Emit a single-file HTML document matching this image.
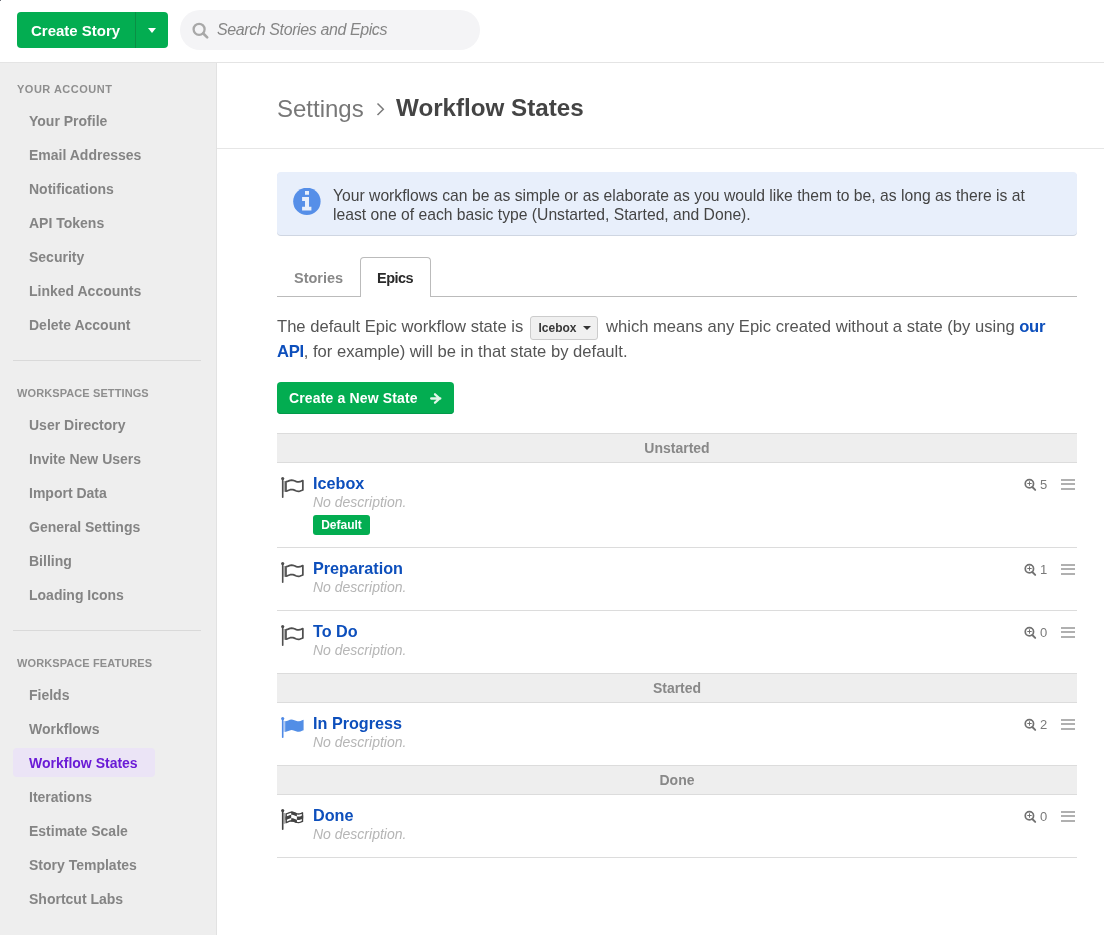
<!DOCTYPE html>
<html><head><meta charset="utf-8">
<style>
*{box-sizing:border-box;margin:0;padding:0}
html,body{width:1104px;height:935px;overflow:hidden;background:#fff;-webkit-font-smoothing:antialiased;font-family:"Liberation Sans",sans-serif;}
.abs{position:absolute;white-space:nowrap}
#header{position:absolute;left:0;top:0;width:1104px;height:63px;background:#fff;border-bottom:1px solid #e4e4e4}
#cs{position:absolute;left:17px;top:12px;width:151px;height:36px;background:#03ad51;border-radius:4px}
#cs .t{position:absolute;left:14px;top:1px;line-height:36px;color:#fff;font-weight:700;font-size:15px}
#cs .div{position:absolute;left:118px;top:0;width:1px;height:36px;background:#0a8f45}
#cs .caret{position:absolute;left:130.5px;top:15.5px;width:0;height:0;border-left:4px solid transparent;border-right:4px solid transparent;border-top:5px solid #fff}
#search{position:absolute;left:180px;top:10px;width:300px;height:40px;border-radius:20px;background:#f4f4f6}
#search .t{position:absolute;left:37px;top:0;line-height:40px;color:#858585;font-style:italic;font-size:16px;letter-spacing:-0.4px}
#sidebar{position:absolute;left:0;top:63px;width:217px;height:872px;background:#eeeeee;border-right:1px solid #e2e2e2}
.sh{position:absolute;left:17px;font-size:11px;font-weight:700;color:#8e8e8e;letter-spacing:0.5px;white-space:nowrap}
.si{position:absolute;left:29px;font-size:14px;font-weight:700;color:#848484;letter-spacing:0px;white-space:nowrap}
.sdiv{position:absolute;left:13px;width:188px;height:1px;background:#d9d9d9}
#active{position:absolute;left:13px;top:748px;width:142px;height:29px;background:#ebe4f6;border-radius:4px}
#main{position:absolute;left:217px;top:63px;width:887px;height:872px}
.title{position:absolute;left:277px;top:95px;font-size:24px;white-space:nowrap}
.hline{position:absolute;left:217px;top:148px;width:887px;height:1px;background:#e6e6e6}
#info{position:absolute;left:277px;top:172px;width:800px;height:63px;background:#e8effb;border-radius:4px;box-shadow:0 1px 0 #cfd6e2}
#info .ic{position:absolute;left:16px;top:16px;width:28px;height:28px}
#info .t{position:absolute;left:56px;top:14px;font-size:15.7px;line-height:19px;color:#444;white-space:nowrap}
#tabs{position:absolute;left:277px;top:296px;width:800px;height:1px;background:#bbb}
.tab{position:absolute;font-size:14.5px;font-weight:700;margin-top:1px;white-space:nowrap}
#epictab{position:absolute;left:360px;top:257px;width:71px;height:40px;background:#fff;border:1px solid #bbb;border-bottom:none;border-radius:4px 4px 0 0}
.para{position:absolute;left:277px;font-size:16.6px;color:#555;white-space:nowrap}
.link{color:#0d4fbc;font-weight:700;letter-spacing:-0.3px}
#dd{position:absolute;left:530px;top:316px;width:68px;height:24px;background:#f0f0f0;border:1px solid #ccc;border-radius:3px}
#dd .t{position:absolute;left:7.5px;top:0;line-height:22px;font-size:12px;font-weight:700;color:#383838}
#dd .caret{position:absolute;left:52px;top:9px;border-left:4px solid transparent;border-right:4px solid transparent;border-top:4px solid #333}
#newbtn{position:absolute;left:277px;top:382px;width:177px;height:32px;background:#03ad51;border-radius:4px;box-shadow:inset 0 -1px 0 #02994a}
#newbtn .t{position:absolute;left:12px;top:0;line-height:32px;color:#fff;font-size:14px;font-weight:700;letter-spacing:0.15px}
.gh{position:absolute;left:277px;width:800px;height:30px;background:#eeeeee;border-top:1px solid #dcdcdc;border-bottom:1px solid #dcdcdc;text-align:center;font-size:14px;font-weight:700;color:#888;line-height:28px}
.rb{position:absolute;left:277px;width:800px;height:1px;background:#dcdcdc}
.name{position:absolute;left:313px;font-size:16.2px;font-weight:700;color:#0d4fbc;white-space:nowrap}
.desc{position:absolute;left:313px;font-size:14px;font-style:italic;color:#b5b5b5;white-space:nowrap}
.badge{position:absolute;left:313px;top:515px;width:57px;height:20px;background:#03ad51;border-radius:3px;color:#fff;font-size:12px;font-weight:700;line-height:20px;text-align:center}
.flag{position:absolute;left:280px;width:26px;height:22px}
.cntn{position:absolute;left:1040px;font-size:13px;line-height:15px;color:#7a7a7a}
.ham{position:absolute;left:1061px;width:14px;height:12px}
.ham i{position:absolute;left:0;width:14px;height:2px;background:#b0b0b0}
</style></head>
<body><div style="position:absolute;left:0;top:0;width:1104px;height:935px;will-change:transform">
<div style="position:absolute;left:0;top:0;width:1px;height:1px;background:#6e717a;z-index:5"></div><div id="header">
  <div id="cs"><span class="t">Create Story</span><span class="div"></span><span class="caret"></span></div>
  <div id="search">
    <svg style="position:absolute;left:12px;top:12px" width="18" height="18" viewBox="0 0 18 18"><circle cx="7.1" cy="7.3" r="5.5" fill="none" stroke="#a8a8a8" stroke-width="2.3"/><line x1="11.3" y1="11.5" x2="15.2" y2="15.4" stroke="#a8a8a8" stroke-width="2.6" stroke-linecap="round"/></svg>
    <span class="t">Search Stories and Epics</span>
  </div>
</div>

<div id="sidebar"></div>
<div class="sh" style="top:83px">YOUR ACCOUNT</div>
<div class="si" style="top:113px">Your Profile</div>
<div class="si" style="top:147px">Email Addresses</div>
<div class="si" style="top:181px">Notifications</div>
<div class="si" style="top:215px">API Tokens</div>
<div class="si" style="top:249px">Security</div>
<div class="si" style="top:283px">Linked Accounts</div>
<div class="si" style="top:317px">Delete Account</div>
<div class="sdiv" style="top:360px"></div>
<div class="sh" style="top:387px;letter-spacing:0.1px">WORKSPACE SETTINGS</div>
<div class="si" style="top:417px">User Directory</div>
<div class="si" style="top:451px">Invite New Users</div>
<div class="si" style="top:485px">Import Data</div>
<div class="si" style="top:519px">General Settings</div>
<div class="si" style="top:553px">Billing</div>
<div class="si" style="top:587px">Loading Icons</div>
<div class="sdiv" style="top:630px"></div>
<div class="sh" style="top:657px;letter-spacing:0.1px">WORKSPACE FEATURES</div>
<div class="si" style="top:687px">Fields</div>
<div class="si" style="top:721px">Workflows</div>
<div id="active"></div>
<div class="si" style="top:755px;color:#6a1bd6">Workflow States</div>
<div class="si" style="top:789px">Iterations</div>
<div class="si" style="top:823px">Estimate Scale</div>
<div class="si" style="top:857px">Story Templates</div>
<div class="si" style="top:891px">Shortcut Labs</div>

<div class="title" style="color:#777">Settings</div><svg style="position:absolute;left:370px;top:98px" width="20" height="22"><polyline points="7.5,5.5 13.3,11.3 7.5,17" fill="none" stroke="#7a7a7a" stroke-width="1.5"/></svg><div class="title" style="left:396px;color:#444;font-weight:700;font-size:24.2px;top:94px">Workflow States</div>
<div class="hline"></div>

<div id="info">
  <svg class="ic" viewBox="0 0 28 28"><circle cx="13.9" cy="13.4" r="13.7" fill="#568fe8"/><path d="M12 3h4v3.7h-4z M9.1 9.1H16V18.7H18.4V22.5H9.1V18.7H12V12.9H9.1z" fill="#e8effb"/></svg>
  <div class="t">Your workflows can be as simple or as elaborate as you would like them to be, as long as there is at<br>least one of each basic type (Unstarted, Started, and Done).</div>
</div>

<div id="tabs"></div>
<div id="epictab"></div>
<div class="tab" style="left:294px;top:269px;color:#888">Stories</div>
<div class="tab" style="left:377px;top:269px;color:#2a2a2a;letter-spacing:-0.5px">Epics</div>

<div class="para" style="top:317px">The default Epic workflow state is</div>
<div id="dd"><span class="t">Icebox</span><span class="caret"></span></div>
<div class="para" style="left:606px;top:317px">which means any Epic created without a state (by using <span class="link">our</span></div>
<div class="para" style="top:342px"><span class="link">API</span>, for example) will be in that state by default.</div>

<div id="newbtn"><span class="t">Create a New State</span>
  <svg style="position:absolute;left:152px;top:10px" width="14" height="14" viewBox="0 0 14 14"><path d="M2.2 6.5H11.3M6 2.3L10.7 6.5L6 10.7" fill="none" stroke="#e2f6ea" stroke-width="2.3" stroke-linecap="round" stroke-linejoin="round"/></svg>
</div>

<!-- table -->
<div class="gh" style="top:433px">Unstarted</div>
<div class="rb" style="top:547px"></div>
<div class="rb" style="top:610px"></div>
<div class="gh" style="top:673px">Started</div>
<div class="rb" style="top:765px"></div>
<div class="gh" style="top:765px">Done</div>
<div class="rb" style="top:857px"></div>

<div class="name" style="top:474px">Icebox</div>
<div class="desc" style="top:494px">No description.</div>
<div class="badge">Default</div>

<div class="name" style="top:559px">Preparation</div>
<div class="desc" style="top:579px">No description.</div>

<div class="name" style="top:622px">To Do</div>
<div class="desc" style="top:642px">No description.</div>

<div class="name" style="top:714px">In Progress</div>
<div class="desc" style="top:734px">No description.</div>

<div class="name" style="top:806px">Done</div>
<div class="desc" style="top:826px">No description.</div>

<svg style="position:absolute;left:276px;top:472px" width="34" height="30" viewBox="0 0 34 30"><rect x="7.5" y="9" width="1.9" height="10.8" fill="#4f4f4f" opacity="0.45"/><line x1="6.7" y1="6.8" x2="6.7" y2="25.2" stroke="#4f4f4f" stroke-width="1.6" stroke-linecap="round"/><circle cx="6.7" cy="6.6" r="1.6" fill="#4f4f4f"/><path d="M9.95 9.86 L11.36 9.45 12.77 8.88 14.18 8.37 15.58 8.15 16.99 8.31 18.40 8.78 19.81 9.36 21.22 9.81 22.62 9.94 24.03 9.70 25.44 9.18 26.85 8.61 L26.85 17.96 25.44 18.53 24.03 19.05 22.62 19.29 21.22 19.16 19.81 18.71 18.40 18.13 16.99 17.66 15.58 17.50 14.17 17.72 12.77 18.23 11.36 18.80 9.95 19.21 Z" fill="none" stroke="#4f4f4f" stroke-width="1.75" stroke-linejoin="round"/></svg>
<svg style="position:absolute;left:1018px;top:474px" width="20" height="20" viewBox="0 0 20 20"><circle cx="11.4" cy="9.7" r="4.15" fill="none" stroke="#717171" stroke-width="1.7"/><line x1="14.3" y1="13" x2="17.2" y2="15.9" stroke="#717171" stroke-width="1.9" stroke-linecap="round"/><path d="M11.5 7.3v4.4M9.3 9.5h4.4" stroke="#717171" stroke-width="1"/></svg>
<div class="cntn" style="top:477px">5</div>
<div class="ham" style="top:479px"><i style="top:0"></i><i style="top:4px"></i><i style="top:9px"></i></div>
<svg style="position:absolute;left:276px;top:557px" width="34" height="30" viewBox="0 0 34 30"><rect x="7.5" y="9" width="1.9" height="10.8" fill="#4f4f4f" opacity="0.45"/><line x1="6.7" y1="6.8" x2="6.7" y2="25.2" stroke="#4f4f4f" stroke-width="1.6" stroke-linecap="round"/><circle cx="6.7" cy="6.6" r="1.6" fill="#4f4f4f"/><path d="M9.95 9.86 L11.36 9.45 12.77 8.88 14.18 8.37 15.58 8.15 16.99 8.31 18.40 8.78 19.81 9.36 21.22 9.81 22.62 9.94 24.03 9.70 25.44 9.18 26.85 8.61 L26.85 17.96 25.44 18.53 24.03 19.05 22.62 19.29 21.22 19.16 19.81 18.71 18.40 18.13 16.99 17.66 15.58 17.50 14.17 17.72 12.77 18.23 11.36 18.80 9.95 19.21 Z" fill="none" stroke="#4f4f4f" stroke-width="1.75" stroke-linejoin="round"/></svg>
<svg style="position:absolute;left:1018px;top:559px" width="20" height="20" viewBox="0 0 20 20"><circle cx="11.4" cy="9.7" r="4.15" fill="none" stroke="#717171" stroke-width="1.7"/><line x1="14.3" y1="13" x2="17.2" y2="15.9" stroke="#717171" stroke-width="1.9" stroke-linecap="round"/><path d="M11.5 7.3v4.4M9.3 9.5h4.4" stroke="#717171" stroke-width="1"/></svg>
<div class="cntn" style="top:562px">1</div>
<div class="ham" style="top:564px"><i style="top:0"></i><i style="top:4px"></i><i style="top:9px"></i></div>
<svg style="position:absolute;left:276px;top:620px" width="34" height="30" viewBox="0 0 34 30"><rect x="7.5" y="9" width="1.9" height="10.8" fill="#4f4f4f" opacity="0.45"/><line x1="6.7" y1="6.8" x2="6.7" y2="25.2" stroke="#4f4f4f" stroke-width="1.6" stroke-linecap="round"/><circle cx="6.7" cy="6.6" r="1.6" fill="#4f4f4f"/><path d="M9.95 9.86 L11.36 9.45 12.77 8.88 14.18 8.37 15.58 8.15 16.99 8.31 18.40 8.78 19.81 9.36 21.22 9.81 22.62 9.94 24.03 9.70 25.44 9.18 26.85 8.61 L26.85 17.96 25.44 18.53 24.03 19.05 22.62 19.29 21.22 19.16 19.81 18.71 18.40 18.13 16.99 17.66 15.58 17.50 14.17 17.72 12.77 18.23 11.36 18.80 9.95 19.21 Z" fill="none" stroke="#4f4f4f" stroke-width="1.75" stroke-linejoin="round"/></svg>
<svg style="position:absolute;left:1018px;top:622px" width="20" height="20" viewBox="0 0 20 20"><circle cx="11.4" cy="9.7" r="4.15" fill="none" stroke="#717171" stroke-width="1.7"/><line x1="14.3" y1="13" x2="17.2" y2="15.9" stroke="#717171" stroke-width="1.9" stroke-linecap="round"/><path d="M11.5 7.3v4.4M9.3 9.5h4.4" stroke="#717171" stroke-width="1"/></svg>
<div class="cntn" style="top:625px">0</div>
<div class="ham" style="top:627px"><i style="top:0"></i><i style="top:4px"></i><i style="top:9px"></i></div>
<svg style="position:absolute;left:276px;top:712px" width="34" height="30" viewBox="0 0 34 30"><rect x="7.5" y="9" width="1.9" height="10.8" fill="#4f8ae6" opacity="0.45"/><line x1="6.7" y1="6.8" x2="6.7" y2="25.2" stroke="#4f8ae6" stroke-width="1.6" stroke-linecap="round"/><circle cx="6.7" cy="6.6" r="1.6" fill="#4f8ae6"/><path d="M9.20 9.30 L10.73 9.02 12.27 8.44 13.80 7.83 15.33 7.51 16.87 7.63 18.40 8.13 19.93 8.76 21.47 9.22 23.00 9.26 24.53 8.89 26.07 8.27 27.60 7.71 L27.60 18.31 26.07 18.87 24.53 19.49 23.00 19.86 21.47 19.82 19.93 19.36 18.40 18.73 16.87 18.23 15.33 18.11 13.80 18.43 12.27 19.04 10.73 19.62 9.20 19.90 Z" fill="#528ee6"/></svg>
<svg style="position:absolute;left:1018px;top:714px" width="20" height="20" viewBox="0 0 20 20"><circle cx="11.4" cy="9.7" r="4.15" fill="none" stroke="#717171" stroke-width="1.7"/><line x1="14.3" y1="13" x2="17.2" y2="15.9" stroke="#717171" stroke-width="1.9" stroke-linecap="round"/><path d="M11.5 7.3v4.4M9.3 9.5h4.4" stroke="#717171" stroke-width="1"/></svg>
<div class="cntn" style="top:717px">2</div>
<div class="ham" style="top:719px"><i style="top:0"></i><i style="top:4px"></i><i style="top:9px"></i></div>
<svg style="position:absolute;left:276px;top:804px" width="34" height="30" viewBox="0 0 34 30"><rect x="7.5" y="9" width="1.9" height="10.8" fill="#444" opacity="0.45"/><line x1="6.7" y1="6.8" x2="6.7" y2="25.2" stroke="#444" stroke-width="1.6" stroke-linecap="round"/><circle cx="6.7" cy="6.6" r="1.6" fill="#444"/><path d="M15.20 7.52 L16.15 7.52 17.10 7.69 18.05 7.99 19.00 8.38 19.95 8.77 20.90 9.09 L20.90 12.42 19.95 12.10 19.00 11.71 18.05 11.33 17.10 11.02 16.15 10.85 15.20 10.86 Z M9.50 12.61 L10.45 12.43 11.40 12.12 12.35 11.73 13.30 11.35 14.25 11.03 15.20 10.86 L15.20 14.19 14.25 14.37 13.30 14.68 12.35 15.07 11.40 15.45 10.45 15.77 9.50 15.94 Z M20.90 12.42 L21.95 12.61 23.00 12.60 24.05 12.38 25.10 12.00 26.15 11.57 27.20 11.17 L27.20 14.50 26.15 14.90 25.10 15.34 24.05 15.71 23.00 15.93 21.95 15.95 20.90 15.75 Z M15.20 14.19 L16.15 14.19 17.10 14.35 18.05 14.66 19.00 15.05 19.95 15.44 20.90 15.75 L20.90 19.09 19.95 18.77 19.00 18.38 18.05 17.99 17.10 17.69 16.15 17.52 15.20 17.52 Z" fill="#444"/><path d="M10.20 9.86 L11.56 9.43 12.92 8.86 14.27 8.39 15.63 8.20 16.99 8.36 18.35 8.81 19.71 9.37 21.07 9.83 22.43 10.00 23.78 9.82 25.14 9.35 26.50 8.79 L26.50 17.39 25.14 17.95 23.78 18.42 22.43 18.60 21.07 18.43 19.71 17.97 18.35 17.41 16.99 16.96 15.63 16.80 14.27 16.99 12.92 17.46 11.56 18.03 10.20 18.46 Z" fill="none" stroke="#444" stroke-width="1.4" stroke-linejoin="round"/></svg>
<svg style="position:absolute;left:1018px;top:806px" width="20" height="20" viewBox="0 0 20 20"><circle cx="11.4" cy="9.7" r="4.15" fill="none" stroke="#717171" stroke-width="1.7"/><line x1="14.3" y1="13" x2="17.2" y2="15.9" stroke="#717171" stroke-width="1.9" stroke-linecap="round"/><path d="M11.5 7.3v4.4M9.3 9.5h4.4" stroke="#717171" stroke-width="1"/></svg>
<div class="cntn" style="top:809px">0</div>
<div class="ham" style="top:811px"><i style="top:0"></i><i style="top:4px"></i><i style="top:9px"></i></div>
</div></body></html>
